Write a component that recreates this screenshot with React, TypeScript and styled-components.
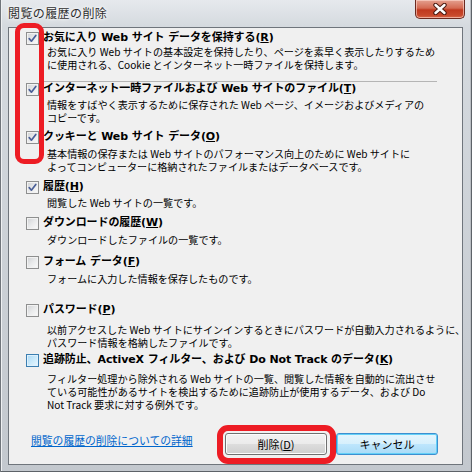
import React from "react";
import styled, { createGlobalStyle, css } from "styled-components";

const GlobalStyle = createGlobalStyle`
  html, body { margin: 0; padding: 0; background: #c9ced4; }
  body { font-family: "Noto Sans CJK JP", "Noto Sans", sans-serif; }
`;

const Window = styled.div`
  position: relative;
  width: 472px;
  height: 472px;
  box-sizing: border-box;
  padding: 0 9px 7px 8px;
  display: flex;
  flex-direction: column;
  background: linear-gradient(to bottom, #e6e9ed 0px, #d5dadf 26px, #c3c8ce 100%);
  box-shadow: inset 1px 0 0 #70757b, inset -1px 0 0 #5d6268, inset 0 -1px 0 #5d6268,
    inset 2px 0 0 #eef0f2, inset -2px 0 0 #b9bdc2;
  font-family: "Noto Sans CJK JP", "Noto Sans", sans-serif;
  color: #000;
  overflow: hidden;
`;

const TitleBar = styled.div`
  height: 27px;
  display: flex;
  justify-content: space-between;
  align-items: flex-start;
  flex-shrink: 0;
`;

const TitleText = styled.div`
  margin-top: 5px;
  font-size: 12px;
  line-height: 16px;
  letter-spacing: 0.4px;
  color: #2e2e2e;
  text-shadow: 0 0 6px #ffffff, 0 0 3px #ffffff;
`;

const CloseButton = styled.div`
  width: 50px;
  height: 19px;
  margin-right: -2px;
  box-sizing: border-box;
  border: 1px solid #6b2a20;
  border-top: none;
  border-radius: 0 0 5px 5px;
  background: linear-gradient(to bottom, #e4a08f 0%, #d46a52 45%, #c0391f 55%, #c8492c 85%, #d9694a 100%);
  box-shadow: inset 0 0 0 1px rgba(255, 220, 210, 0.6);
  display: flex;
  align-items: center;
  justify-content: center;
`;

const Client = styled.div`
  flex: 1;
  display: flex;
  flex-direction: column;
  background: #f0f0f0;
  border: 1px solid #6f757c;
  padding: 3px 0 0 17px;
  box-sizing: border-box;
`;

const Item = styled.div<{ $mt: number }>`
  margin-top: ${(p) => p.$mt}px;
  display: flex;
  flex-direction: column;
`;

const ItemHead = styled.div`
  display: flex;
  align-items: center;
  gap: 4px;
  height: 14px;
`;

const Box = styled.span<{ $hot?: boolean }>`
  width: 13px;
  height: 13px;
  box-sizing: border-box;
  flex-shrink: 0;
  border: 1px solid #8e8f8f;
  background: linear-gradient(135deg, #cfd1d4 0%, #e9eaeb 50%, #fbfbfb 100%);
  box-shadow: inset 0 0 0 1px #f2f2f2;
  display: flex;
  align-items: center;
  justify-content: center;
  ${(p) =>
    p.$hot &&
    css`
      border-color: #3c7fb1;
      background: linear-gradient(135deg, #a9d9f6 0%, #cdebfb 55%, #eaf7ff 100%);
      box-shadow: inset 0 0 0 1px #def1fd;
    `}
`;

const ItemTitle = styled.span`
  font-family: "DejaVu Sans", "Noto Sans CJK JP", sans-serif;
  font-size: 11px;
  font-weight: 700;
  line-height: 14px;
  white-space: nowrap;
  letter-spacing: -0.1px;
`;

const Desc = styled.div<{ $gap: number }>`
  margin-top: ${(p) => p.$gap}px;
  margin-left: 21px;
  font-size: 10.1px;
  line-height: 13px;
  white-space: nowrap;
`;

const Line = styled.div`
  display: block;
  height: 13px;
`;

const Separator = styled.div`
  margin: 10px 0 0 17px;
  width: 394px;
  height: 1px;
  background: #b5b5b5;
`;

const Footer = styled.div`
  margin-top: 22px;
  display: flex;
  align-items: flex-start;
  justify-content: space-between;
  padding: 0 24px 0 5px;
`;

const HelpLink = styled.a`
  font-size: 10.8px;
  line-height: 14px;
  color: #0066cc;
  text-decoration: underline;
  cursor: pointer;
  white-space: nowrap;
`;

const Buttons = styled.div`
  display: flex;
  gap: 9px;
`;

const Button = styled.button<{ $primary?: boolean }>`
  width: 102px;
  height: 22px;
  box-sizing: border-box;
  padding: 0;
  border: 1px solid #707070;
  border-radius: 3px;
  font-family: "Noto Sans CJK JP", "Noto Sans", sans-serif;
  font-size: 11px;
  line-height: 18px;
  color: #000;
  background: linear-gradient(to bottom, #f2f2f2 0%, #ebebeb 50%, #dddddd 50%, #cfcfcf 100%);
  box-shadow: inset 0 0 0 1px #fcfcfc;
  ${(p) =>
    p.$primary &&
    css`
      border-color: #3c8fd0;
      background: linear-gradient(to bottom, #e5f5fd 0%, #d6f0fc 50%, #bee6fd 50%, #a9dbf6 100%);
      box-shadow: inset 0 0 0 1px #64d0f7;
    `}
`;

const Mn = styled.span`
  text-decoration: underline;
`;

const Annotation = styled.div<{ $x: number; $y: number; $w: number; $h: number; $bw: number; $r: number }>`
  position: absolute;
  left: ${(p) => p.$x}px;
  top: ${(p) => p.$y}px;
  width: ${(p) => p.$w}px;
  height: ${(p) => p.$h}px;
  box-sizing: border-box;
  border: ${(p) => p.$bw}px solid #ed1c24;
  border-radius: ${(p) => p.$r}px;
  pointer-events: none;
`;

const Check = () => (
  <svg width="9" height="9" viewBox="0 0 9 9">
    <path d="M1.2 4.6 L3.4 7.2 L7.8 1.4" fill="none" stroke="#4a5f97" strokeWidth="1.7" strokeLinecap="round" strokeLinejoin="round" />
  </svg>
);

const CloseX = () => (
  <svg width="16" height="12" viewBox="0 0 16 12">
    <path d="M3.5 2 L12.5 10 M12.5 2 L3.5 10" stroke="#4a1a12" strokeWidth="4.4" strokeLinecap="round" />
    <path d="M3.5 2 L12.5 10 M12.5 2 L3.5 10" stroke="#ffffff" strokeWidth="2.4" strokeLinecap="round" />
  </svg>
);

type Entry = {
  title: React.ReactNode;
  lines: string[];
  checked: boolean;
  hot?: boolean;
  mt: number;
  gap: number;
};

const title = (text: string, key: string) => (
  <>
    {text}(<Mn>{key}</Mn>)
  </>
);

const entries: Entry[] = [
  {
    title: title("お気に入り Web サイト データを保持する", "R"),
    lines: [
      "お気に入り Web サイトの基本設定を保持したり、ページを素早く表示したりするため",
      "に使用される、Cookie とインターネット一時ファイルを保持します。",
    ],
    checked: true,
    mt: 0,
    gap: 0,
  },
  {
    title: title("インターネット一時ファイルおよび Web サイトのファイル", "T"),
    lines: ["情報をすばやく表示するために保存された Web ページ、イメージおよびメディアの", "コピーです。"],
    checked: true,
    mt: 0,
    gap: 2,
  },
  {
    title: title("クッキーと Web サイト データ", "O"),
    lines: [
      "基本情報の保存または Web サイトのパフォーマンス向上のために Web サイトに",
      "よってコンピューターに格納されたファイルまたはデータベースです。",
    ],
    checked: true,
    mt: 6,
    gap: 3,
  },
  {
    title: title("履歴", "H"),
    lines: ["閲覧した Web サイトの一覧です。"],
    checked: true,
    mt: 7,
    gap: 2,
  },
  {
    title: title("ダウンロードの履歴", "W"),
    lines: ["ダウンロードしたファイルの一覧です。"],
    checked: false,
    mt: 7,
    gap: 3,
  },
  {
    title: title("フォーム データ", "F"),
    lines: ["フォームに入力した情報を保存したものです。"],
    checked: false,
    mt: 9,
    gap: 3,
  },
  {
    title: title("パスワード", "P"),
    lines: [
      "以前アクセスした Web サイトにサインインするときにパスワードが自動入力されるように、",
      "パスワード情報を格納したファイルです。",
    ],
    checked: false,
    mt: 18,
    gap: 6,
  },
  {
    title: title("追跡防止、ActiveX フィルター、および Do Not Track のデータ", "K"),
    lines: [
      "フィルター処理から除外される Web サイトの一覧、閲覧した情報を自動的に流出させ",
      "ている可能性があるサイトを検出するために追跡防止が使用するデータ、および Do",
      "Not Track 要求に対する例外です。",
    ],
    checked: false,
    hot: true,
    mt: 4,
    gap: 5,
  },
];

const EntryView: React.FC<{ e: Entry }> = ({ e }) => (
  <Item $mt={e.mt}>
    <ItemHead>
      <Box $hot={e.hot}>{e.checked && <Check />}</Box>
      <ItemTitle>{e.title}</ItemTitle>
    </ItemHead>
    <Desc $gap={e.gap}>
      {e.lines.map((l, i) => (
        <Line key={i}>{l}</Line>
      ))}
    </Desc>
  </Item>
);

export default function App() {
  return (
    <>
      <GlobalStyle />
      <Window>
        <TitleBar>
          <TitleText>閲覧の履歴の削除</TitleText>
          <CloseButton>
            <CloseX />
          </CloseButton>
        </TitleBar>
        <Client>
          <EntryView e={entries[0]} />
          <Separator />
          {entries.slice(1).map((e, i) => (
            <EntryView key={i} e={e} />
          ))}
          <Footer>
            <HelpLink>閲覧の履歴の削除についての詳細</HelpLink>
            <Buttons>
              <Button>
                削除(<Mn>D</Mn>)
              </Button>
              <Button $primary>キャンセル</Button>
            </Buttons>
          </Footer>
        </Client>
        <Annotation $x={15} $y={23} $w={29} $h={141} $bw={5} $r={9} />
        <Annotation $x={217} $y={425} $w={119} $h={39} $bw={6} $r={11} />
      </Window>
    </>
  );
}
